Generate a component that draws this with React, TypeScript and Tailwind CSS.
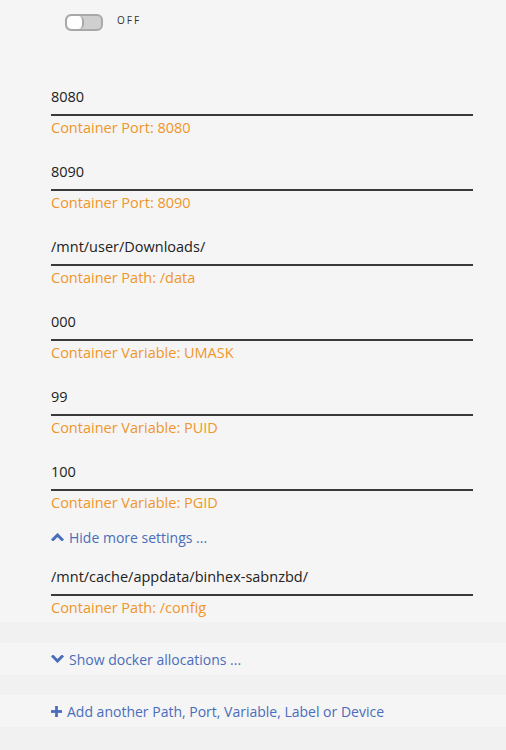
import React from "react";

type Field = { value: string; label: string };

const topFields: Field[] = [
  { value: "8080", label: "Container Port: 8080" },
  { value: "8090", label: "Container Port: 8090" },
  { value: "/mnt/user/Downloads/", label: "Container Path: /data" },
  { value: "000", label: "Container Variable: UMASK" },
  { value: "99", label: "Container Variable: PUID" },
  { value: "100", label: "Container Variable: PGID" },
];

const advancedFields: Field[] = [
  { value: "/mnt/cache/appdata/binhex-sabnzbd/", label: "Container Path: /config" },
];

const FieldRow: React.FC<{ field: Field }> = ({ field }) => (
  <div className="pl-[51px] pr-[33px]">
    <input
      defaultValue={field.value}
      className="block h-[31px] w-full border-b-2 border-[#3a3a3a] bg-transparent pb-[6px] text-[14.5px] text-[#222] outline-none"
    />
    <div className="mt-[3px] text-[14.5px] leading-[18px] text-[#f0962a]">{field.label}</div>
  </div>
);

const ChevronUp = () => (
  <svg viewBox="0 0 12 8" className="h-[8px] w-[13px]" fill="none" stroke="currentColor" strokeWidth="3" strokeLinecap="square">
    <path d="M1.5 6.5L6 2l4.5 4.5" />
  </svg>
);

const ChevronDown = () => (
  <svg viewBox="0 0 12 8" className="h-[8px] w-[13px]" fill="none" stroke="currentColor" strokeWidth="3" strokeLinecap="square">
    <path d="M1.5 1.5L6 6l4.5-4.5" />
  </svg>
);

const Plus = () => (
  <svg viewBox="0 0 12 12" className="h-[11px] w-[11px]" fill="currentColor">
    <rect x="4.5" y="0" width="3" height="12" />
    <rect x="0" y="4.5" width="12" height="3" />
  </svg>
);

export default function App() {
  return (
    <div className="min-h-[750px] w-[506px] bg-[#f5f5f5] font-['Open_Sans',sans-serif]">
      {/* privileged switch */}
      <div className="flex h-[45px] items-start pl-[65px] pt-[14px]">
        <div className="flex h-[17px] w-[38px] overflow-hidden rounded-[6px] border-2 border-[#a8a8a8] bg-[#cfcfcf]">
          <div className="h-full w-[17px] rounded-[5px] border-r-2 border-[#a8a8a8] bg-white" />
        </div>
        <span className="ml-[14px] mt-[-1px] text-[10px] tracking-[2px] text-[#333]">OFF</span>
      </div>

      <div className="flex flex-col gap-[23px] pt-[40px]">
        {topFields.map((f) => (
          <FieldRow key={f.label} field={f} />
        ))}
      </div>

      <button className="mt-[15px] flex h-[20px] items-center gap-[5px] pl-[51px] text-[14px] text-[#4a6dbb]">
        <ChevronUp />
        Hide more settings ...
      </button>

      <div className="mt-[18px] flex flex-col gap-[23px]">
        {advancedFields.map((f) => (
          <FieldRow key={f.label} field={f} />
        ))}
      </div>

      <div className="mt-[5px]">
        <div className="h-[21px] bg-[#f1f1f1]" />
        <div className="flex h-[32px] items-center gap-[5px] pl-[51px] text-[14px] text-[#4a6dbb]">
          <ChevronDown />
          Show docker allocations ...
        </div>
        <div className="h-[20px] bg-[#f1f1f1]" />
        <div className="flex h-[32px] items-center gap-[5px] pl-[51px] text-[14px] text-[#4a6dbb]">
          <Plus />
          Add another Path, Port, Variable, Label or Device
        </div>
        <div className="h-[23px] bg-[#f1f1f1]" />
      </div>
    </div>
  );
}
